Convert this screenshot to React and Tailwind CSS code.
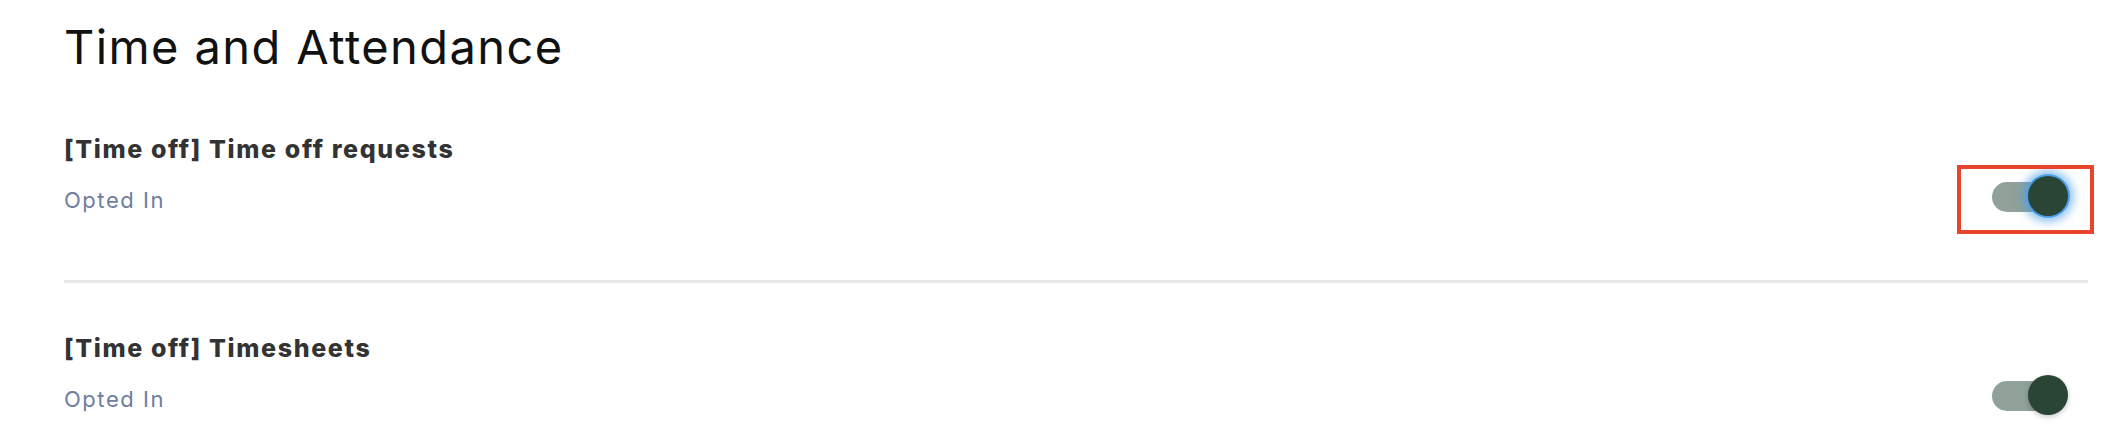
import { useState } from 'react';

const FONT = { fontFamily: 'Inter, "Noto Sans", sans-serif' };

// Settings row with a title, status and switch on the right
function SettingRow({ title, status, checked, onToggle, highlighted, className = '' }) {
  return (
    <div className={`flex justify-between ${className}`}>
      <div>
        <h3 className="text-[25px] leading-[32px] font-extrabold tracking-[0.065em] text-[#333333]">{title}</h3>
        <p className="mt-[21px] text-[22px] leading-[28px] tracking-[0.07em] text-[#6f7e9e]">{status}</p>
      </div>
      <div className="relative mt-[43px] mr-[20px] h-[40px] w-[76px] shrink-0">
        <button
          type="button"
          onClick={onToggle}
          className="absolute inset-0 cursor-pointer"
          aria-pressed={checked}
        >
          <span className="absolute left-0 top-[6px] h-[30px] w-[64px] rounded-full bg-[#8fa198]" />
          <span
            className={`absolute right-0 top-0 h-[40px] w-[40px] rounded-full bg-[#2a4536] ${
              highlighted
                ? 'shadow-[0_0_0_2px_#4b9fea,0_0_8px_6px_rgba(74,158,232,0.6)]'
                : 'shadow-[0_2px_5px_rgba(0,0,0,0.22)]'
            }`}
          />
        </button>
        {highlighted && (
          <div className="pointer-events-none absolute -left-[35px] -right-[26px] -top-[11px] -bottom-[18px] border-[4px] border-[#e8452c]" />
        )}
      </div>
    </div>
  );
}

export default function App() {
  const [requests, setRequests] = useState(true);
  const [timesheets, setTimesheets] = useState(true);

  return (
    <div className="min-h-screen bg-white pl-[64px] pr-[18px]" style={FONT}>
      <h1 className="pt-[19px] text-[47px] leading-[56px] font-normal tracking-[0.03em] text-[#111111]">
        Time and Attendance
      </h1>

      <SettingRow
        className="mt-[58px]"
        title="[Time off] Time off requests"
        status={requests ? 'Opted In' : 'Opted Out'}
        checked={requests}
        onToggle={() => setRequests(!requests)}
        highlighted
      />

      <div className="mt-[64px] h-[3px] bg-[#e8e8e8]" />

      <SettingRow
        className="mt-[49px]"
        title="[Time off] Timesheets"
        status={timesheets ? 'Opted In' : 'Opted Out'}
        checked={timesheets}
        onToggle={() => setTimesheets(!timesheets)}
      />
    </div>
  );
}
